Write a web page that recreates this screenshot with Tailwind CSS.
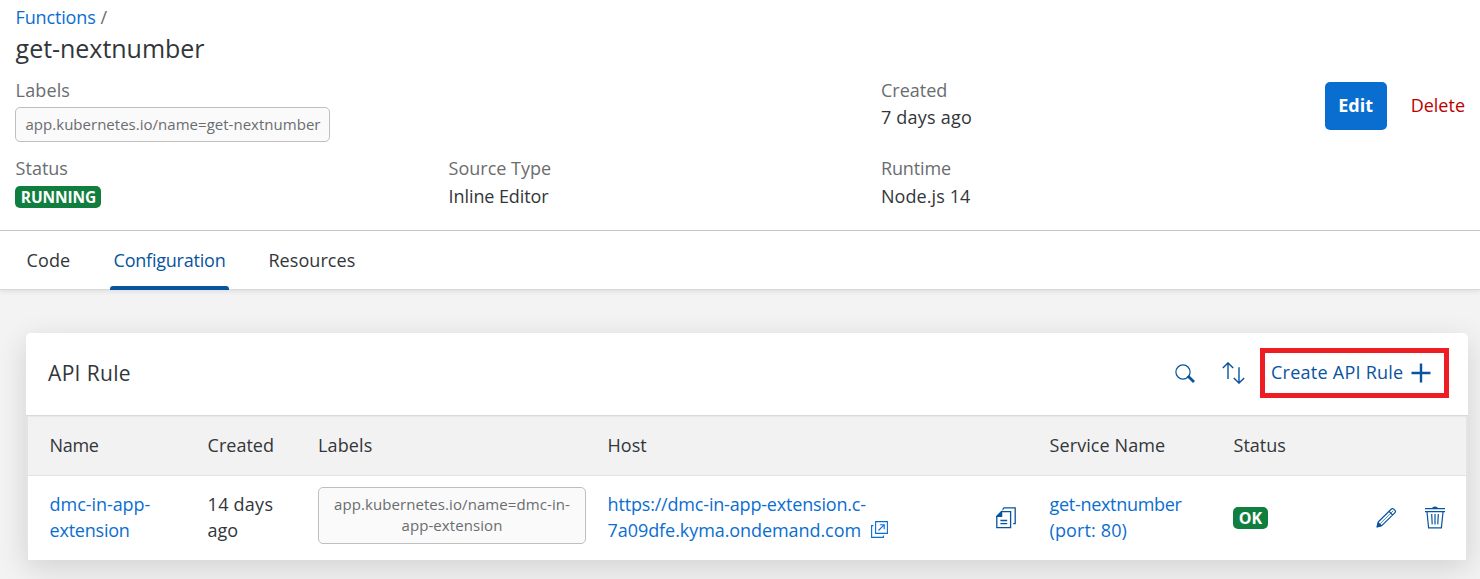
<!DOCTYPE html>
<html lang="en">
<head>
<meta charset="utf-8">
<title>get-nextnumber</title>
<script src="https://cdn.jsdelivr.net/npm/@tailwindcss/browser@4"></script>
</head>
<body class="flex h-[579px] flex-col overflow-hidden bg-[#f3f3f3] font-['Open_Sans',sans-serif] text-[18px] leading-6 text-[#32363a]">
  <header class="h-[231px] shrink-0 border-b border-[#c6c6c6] bg-white pt-[5px] pl-[15.6px]">
    <nav class="flex gap-[5px]"><a class="tracking-[-0.16px] text-[#0a6ed1]">Functions</a><span class="text-[#6a6d70]">/</span></nav>
    <h1 class="mt-[3px] text-[25px] leading-8 tracking-[-0.03px]">get-nextnumber</h1>
    <div class="mt-[14px] flex justify-between">
      <dl class="grid grid-cols-[433px_432.4px_300px] grid-rows-[78px_60px]">
        <div class="col-span-2">
          <dt class="tracking-[0.14px] text-[#6a6d70]">Labels</dt>
          <dd class="mt-[5px] -ml-[0.6px] flex h-[35px] w-[315px] justify-center rounded-[5px] border border-[#bfbfbf] bg-[#fafafa] pt-1.5 pl-px text-[15px] leading-[21px] tracking-[0.02px] text-[#6a6d70]">app.kubernetes.io/name=get-nextnumber</dd>
        </div>
        <div>
          <dt class="text-[#6a6d70]">Created</dt>
          <dd class="mt-[3px] tracking-[0.21px]">7 days ago</dd>
        </div>
        <div>
          <dt class="text-[#6a6d70]">Status</dt>
          <dd class="mt-1.5 -ml-[0.6px] flex h-[22px] w-[86px] justify-center rounded-[5px] bg-[#107e3e] pl-px text-[15.5px] leading-[22px] font-bold tracking-[-0.1px] text-white">RUNNING</dd>
        </div>
        <div>
          <dt class="text-[#6a6d70]">Source Type</dt>
          <dd class="mt-1 tracking-[-0.09px]">Inline Editor</dd>
        </div>
        <div>
          <dt class="tracking-[-0.13px] text-[#6a6d70]">Runtime</dt>
          <dd class="mt-1 tracking-[0.08px]">Node.js 14</dd>
        </div>
      </dl>
      <div class="mt-1 flex h-12 items-center gap-6 pr-[15px]">
        <button class="h-12 w-[62px] rounded-[5px] bg-[#0a6ed1] pb-0.5 font-bold text-white">Edit</button>
        <button class="pb-0.5 text-[#bb0000]">Delete</button>
      </div>
    </div>
  </header>

  <nav class="z-10 flex h-[59px] shrink-0 border-b border-[#d9d9d9] bg-white pl-[21px] shadow-[0_2px_4px_rgba(0,0,0,0.08)]">
    <a class="w-[89px] pt-[17px] pl-[5.4px] tracking-[0.18px]">Code</a>
    <a class="relative w-[119px] pt-[17px] text-center tracking-[-0.22px] text-[#0854a0]">Configuration<span class="absolute -bottom-px left-0 h-1 w-full rounded-t-[3px] bg-[#0854a0]"></span></a>
    <a class="ml-[39.4px] pt-[17px] tracking-[0.07px]">Resources</a>
  </nav>

  <main class="mx-auto mt-[43px] w-[1442px] translate-x-[7px] rounded-t-[5px] shadow-[0_8px_30px_rgba(0,0,0,0.14)]">
    <div class="flex h-[83px] items-center rounded-t-[5px] border-b border-[#d9d9d9] bg-white pl-[22px]">
      <h2 class="flex-1 pb-0.5 text-[21px] leading-7 tracking-[0.35px]">API Rule</h2>
      <svg class="mr-[27px] size-5 text-[#0854a0]" viewBox="0 0 20 20" fill="none" stroke="currentColor"><circle cx="8" cy="8" r="7.1" stroke-width="1.2"/><path d="M13.2 12.2 19 18" stroke-width="2.8"/><path d="M12 12.4 14 14" stroke-width="1.2"/></svg>
      <svg class="mr-[15px] mb-0.5 h-[22px] w-[23px] text-[#0854a0]" viewBox="0 0 23 22" fill="none" stroke="currentColor" stroke-width="1.4"><path d="M6 .9V17M.8 6.1 6 .9l5.2 5.2M17 5.2v15.9M11.8 15.9l5.2 5.2 5.2-5.2"/></svg>
      <button class="mr-[19px] mb-0.5 flex h-[50px] w-[189px] items-center gap-[9px] border-5 border-[#ee1c23] pl-1.5 text-[#0854a0]"><span class="pb-0.5 tracking-[0.25px] whitespace-nowrap">Create API Rule</span><svg class="-ml-px size-5 shrink-0" viewBox="0 0 20 20" fill="none" stroke="currentColor" stroke-width="2.4"><path d="M10 .5v19M.5 10h19"/></svg></button>
    </div>
    <div class="border-x-2 border-t border-x-[#e4e4e4] border-t-[#e8e8e8] bg-white">
      <div class="grid h-[59px] grid-cols-[158px_110.4px_289.6px_442px_184px_auto] border-b border-[#e4e4e4] bg-[#f2f2f2] pt-[16px] pl-[21.6px]">
        <div class="tracking-[-0.33px]">Name</div><div>Created</div><div class="tracking-[0.14px]">Labels</div><div>Host</div><div class="tracking-[0.08px]">Service Name</div><div>Status</div>
      </div>
      <div class="grid h-[84px] grid-cols-[158px_110.4px_289.6px_387.4px_54.6px_183.4px_143px_auto] pl-[21.6px] leading-[26px]">
        <a class="pt-[15px] text-[#0a6ed1]"><span class="tracking-[-0.06px]">dmc-in-app-</span><br><span class="tracking-[-0.23px]">extension</span></a>
        <div class="pt-[15px]"><span class="tracking-[0.25px]">14 days</span><br>ago</div>
        <div class="mt-[11px] h-[57px] w-[268px] rounded-[5px] border border-[#bfbfbf] bg-[#fafafa] pt-1.5 text-center text-[15px] leading-[21px] tracking-[0.08px] text-[#6a6d70]">app.kubernetes.io/name=dmc-in-<br>app-extension</div>
        <a class="pt-[15px] text-[#0a6ed1]"><span class="tracking-[-0.18px]">https://dmc-in-app-extension.c-</span><br><span class="flex items-center gap-[10px]"><span class="tracking-[-0.07px]">7a09dfe.kyma.ondemand.com</span><svg class="mb-px size-[17px]" viewBox="0 0 17 17" fill="none" stroke="currentColor" stroke-width="1.1"><path d="M4.6.6h11.8v11.8H4.6zM2.4 4.6H.6v11.8h11.8v-1.8M7.5 9.5l5.3-5.3M8.8 3.8h4.4v4.4"/></svg></span></a>
        <svg class="mt-[31px] ml-[1.2px] h-[22px] w-5 text-[#0854a0]" viewBox="0 0 20 22" fill="none" stroke="currentColor" stroke-width="1.3"><path d="M5.6 4.6h9v16H.8V9.4zM6.6 2.6 8 .8h11.2v15.8h-2M4.4 13.5h6.8M4.4 16.7h6.8"/><path d="M5.6 4.6v4.8H.8z" fill="currentColor"/></svg>
        <a class="pt-[15px] text-[#0a6ed1]"><span class="tracking-[-0.3px]">get-nextnumber</span><br><span class="tracking-[0.12px]">(port: 80)</span></a>
        <div class="mt-[31px] flex h-[22px] w-[35px] justify-center rounded-[5px] bg-[#107e3e] text-[16px] leading-[22px] font-bold text-white">OK</div>
        <div class="flex gap-7 pt-[30px] text-[#0854a0]">
          <svg class="mt-px h-[22px] w-[21px]" viewBox="0 0 21 22" fill="none" stroke="currentColor" stroke-width="1.2" stroke-linejoin="round"><path d="M2.4 14.8 15.4 2q1.2-1 2.4.2l1.2 1.2q1 1.2 0 2.2L6 18.4l-4.6 1.4zM13 4.4 16.6 8"/><path d="M4.2 16.6 17.2 3.8" stroke-width=".7"/><path d="M2.2 15.6 1 20l4.4-1.4z" fill="currentColor"/></svg>
          <svg class="h-[23px] w-5" viewBox="0 0 20 23" fill="none" stroke="currentColor" stroke-width="1.2"><path d="M0 2.6h20M0 5.6h20M2 6l1.6 15.8h12.8L18 6M6.7 8l.5 10.4M10 8v10.4M13.3 8l-.5 10.4"/><path d="M6.8 2.6Q7.4.4 10 .4t3.2 2.2z" fill="currentColor" stroke="none"/></svg>
        </div>
      </div>
    </div>
  </main>
</body>
</html>
